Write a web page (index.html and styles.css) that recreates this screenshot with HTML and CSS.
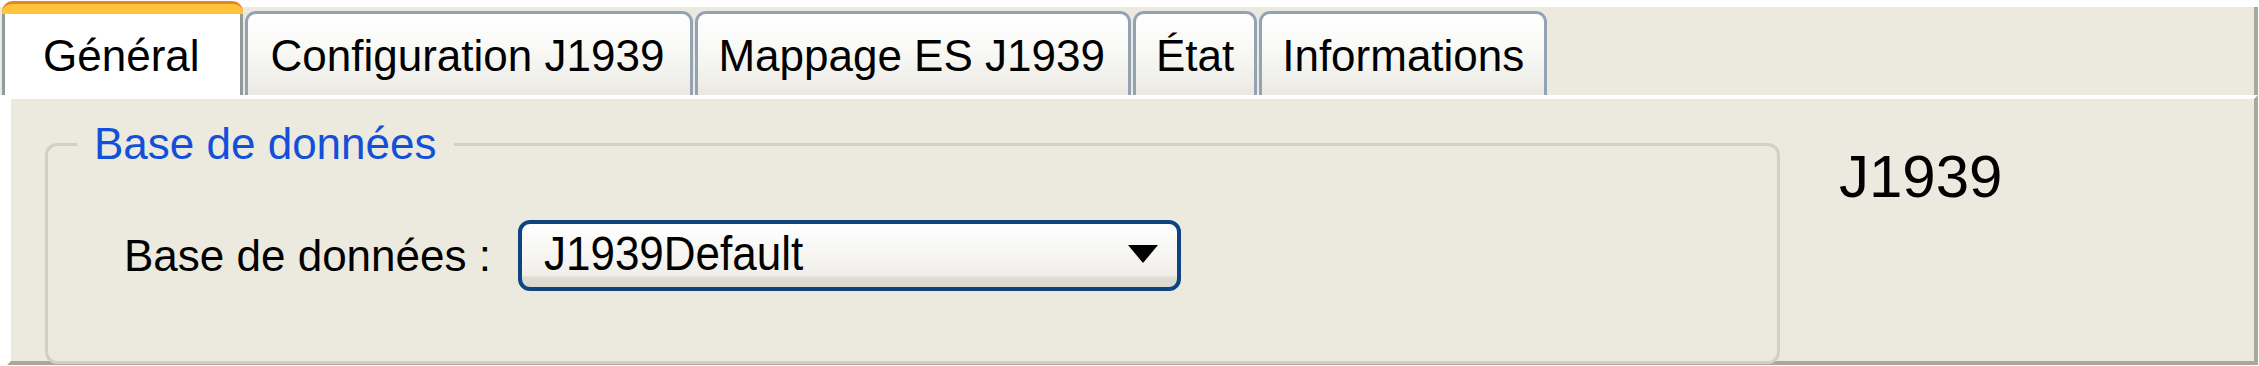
FILE: index.html
```html
<!DOCTYPE html>
<html lang="fr">
<head>
<meta charset="utf-8">
<title>J1939</title>
<link rel="stylesheet" href="styles.css">
</head>
<body>
<div class="tabctl">
  <div class="strip">
    <div class="tab active"><span class="lbl">Général</span></div>
    <div class="tab">Configuration J1939</div>
    <div class="tab">Mappage ES J1939</div>
    <div class="tab">État</div>
    <div class="tab">Informations</div>
  </div>
  <div class="panel">
    <fieldset class="group">
      <legend>Base de données</legend>
      <div class="row">
        <span class="field-label">Base de données :</span>
        <div class="select">
          <span class="value">J1939Default</span>
          <svg class="arrow" width="30" height="18" viewBox="0 0 30 18"><polygon points="0,0 30,0 15,18" fill="#000"/></svg>
        </div>
      </div>
    </fieldset>
    <div class="title">J1939</div>
  </div>
</div>
</body>
</html>
```
FILE: styles.css
```css
html, body {
  margin: 0;
  padding: 0;
  background: #ffffff;
}
body {
  font-family: "Liberation Sans", Arial, sans-serif;
  color: #000;
  width: 2259px;
  height: 366px;
  overflow: hidden;
}
.tabctl {
  padding-top: 7px;
  width: 2258px;
}
.strip {
  box-sizing: border-box;
  width: 2258px;
  height: 88px;
  background: #ECE9DE;
  border-right: 4px solid #ACA899;
  padding-left: 2px;
  display: flex;
  align-items: flex-end;
  gap: 2px;
}
.tab {
  box-sizing: border-box;
  height: 84px;
  border: 3px solid #93A3B3;
  border-bottom: 0;
  border-radius: 11px 11px 0 0;
  background: linear-gradient(#ffffff 0%, #f8f8f5 45%, #efeee9 85%, #e9e7de 100%);
  padding: 17px 23px 0 20px;
  font-size: 44px;
  line-height: 50px;
  white-space: nowrap;
}
.tab:nth-child(2) {
  padding-left: 23px;
  padding-right: 26px;
}
.tab:nth-child(n+4) {
  padding-right: 20px;
}
.tab.active {
  height: 94px;
  border: 0;
  border-top: 3px solid #E2862C;
  border-radius: 11px 11px 0 0;
  background: linear-gradient(#FFC338, #FFD25A);
  padding: 10px 0 0 0;
  overflow: hidden;
  display: flex;
  flex-direction: column;
}
.tab.active .lbl {
  flex: 1;
  background: #ffffff;
  border-left: 3px solid #919B9C;
  border-right: 3px solid #919B9C;
  padding: 17px 40px 0 38px;
}
.panel {
  box-sizing: border-box;
  margin-left: 7px;
  width: 2251px;
  height: 270px;
  background: #ECE9DE;
  border-style: solid;
  border-width: 4px;
  border-color: #ffffff #ACA899 #ACA899 #ffffff;
  display: flex;
  align-items: flex-start;
}
.group {
  box-sizing: border-box;
  margin: 20px 0 0 34px;
  width: 1735px;
  height: 245px;
  min-inline-size: 0;
  border: 3px solid #D3D0C0;
  border-radius: 12px;
  padding: 51px 0 0 0;
}
.group legend {
  margin-left: 29px;
  padding: 0 17px;
  color: #1250DA;
  font-size: 44px;
  line-height: 50px;
}
.row {
  display: flex;
  align-items: center;
  margin-left: 76px;
}
.field-label {
  font-size: 44px;
  line-height: 50px;
  margin-right: 27px;
  white-space: nowrap;
}
.select {
  box-sizing: border-box;
  width: 663px;
  height: 71px;
  border: 4px solid #0E4482;
  border-radius: 12px;
  background: linear-gradient(#ffffff 0%, #f7f6f3 45%, #efeee9 82%, #e0ddd4 84%, #dcd9cf 100%);
  display: flex;
  align-items: center;
  justify-content: space-between;
  padding: 0 19px 0 22px;
}
.select .value {
  font-size: 44px;
  line-height: 50px;
  margin-top: -4px;
  transform: scaleY(1.08);
}
.arrow {
  display: block;
  margin-top: -4px;
}
.title {
  margin: 48px 0 0 59px;
  font-size: 60px;
  line-height: 60px;
}
```
